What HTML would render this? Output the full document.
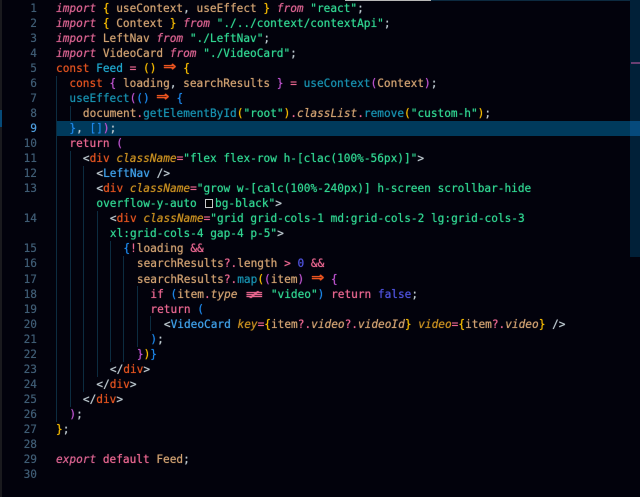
<!DOCTYPE html>
<html><head><meta charset="utf-8"><style>
html,body{margin:0;padding:0;background:#02020c}
#e{position:relative;width:640px;height:497px;overflow:hidden;background:#02020c;font:11.12px/15px "DejaVu Sans Mono","Liberation Mono",monospace;color:#cfa070}
.r{position:absolute;left:0;height:15px;white-space:pre;text-shadow:0 0 .7px currentColor}
.a{position:absolute}
.n{position:absolute;right:603px;color:#3f5c74;white-space:pre;text-shadow:0 0 .5px currentColor}
.g{position:absolute;width:1px;background:#0c2c40}
i{font-style:italic}
.k{color:#e8668f}.ki{color:#d8628f;font-style:italic}.c{color:#e0521f}.y{color:#f4ba00}.m{color:#bb52cc}.b{color:#1c86e8}
.s{color:#30d490}.f{color:#1790ae}.t{color:#1fa6cc}.w{color:#bcc8ce}.at{color:#c88f20;font-style:italic}.l{color:#3fa0e8}.v{color:#4e52dc}.q{color:#cfa070;font-style:italic}
.ar{display:inline-block;width:13.36px;height:10px;position:relative;line-height:0;color:#ea541f}
.ar b{position:absolute;left:-1px;top:5px;width:15.4px;text-align:center;font:bold 14px/0 "DejaVu Sans",sans-serif;transform:scaleX(1.15)}
.ne{display:inline-block;width:20px;color:#e8668f;text-align:center}
.ne b{display:inline-block;transform:scaleX(2.7);font-weight:normal}
.dec{display:inline-block;width:11.6px;height:8px;position:relative}
.dec u{position:absolute;left:1.5px;top:0;width:6px;height:7px;border:1px solid #c8c8c8;background:#000}
</style></head><body><div id="e">
<div class="a" style="left:0;top:0;width:2px;height:497px;background:#1a1a1e"></div>
<div class="a" style="left:0;top:110px;width:2px;height:17px;background:#064a78"></div>
<div class="a" style="left:345px;top:0;width:86px;height:1px;background:#b8b8b8"></div>
<div class="a" style="left:431px;top:0;width:199px;height:1px;background:#0c2a40"></div>
<div class="a" style="left:630px;top:0;width:10px;height:257px;background:#012038"></div>
<div class="a" style="left:56px;top:121px;width:574px;height:15px;background:#003a5c"></div>
<div class="a" style="left:630px;top:121px;width:10px;height:15px;background:#064a7c"></div>
<div class="a" style="left:631px;top:62px;width:9px;height:2px;background:#6a3f72"></div>

<div class="g" style="left:56px;top:76px;height:346px"></div>
<div class="g" style="left:70px;top:106px;height:15px"></div>
<div class="g" style="left:70px;top:151px;height:256px"></div>
<div class="g" style="left:83px;top:166px;height:226px"></div>
<div class="g" style="left:97px;top:211px;height:166px"></div>
<div class="g" style="left:110px;top:241px;height:121px"></div>
<div class="g" style="left:123px;top:256px;height:106px"></div>
<div class="g" style="left:137px;top:286px;height:61px"></div>
<div class="g" style="left:150px;top:316px;height:15px"></div>

<div class="n" style="top:0.6px">1</div>
<div class="n" style="top:15.65px">2</div>
<div class="n" style="top:30.7px">3</div>
<div class="n" style="top:45.75px">4</div>
<div class="n" style="top:60.8px">5</div>
<div class="n" style="top:75.85px">6</div>
<div class="n" style="top:90.9px">7</div>
<div class="n" style="top:105.95px">8</div>
<div class="n" style="top:121px;color:#4f9ede">9</div>
<div class="n" style="top:136.05px">10</div>
<div class="n" style="top:151.1px">11</div>
<div class="n" style="top:166.15px">12</div>
<div class="n" style="top:181.2px">13</div>
<div class="n" style="top:211.3px">14</div>
<div class="n" style="top:241.4px">15</div>
<div class="n" style="top:256.45px">16</div>
<div class="n" style="top:271.5px">17</div>
<div class="n" style="top:286.55px">18</div>
<div class="n" style="top:301.6px">19</div>
<div class="n" style="top:316.65px">20</div>
<div class="n" style="top:331.7px">21</div>
<div class="n" style="top:346.75px">22</div>
<div class="n" style="top:361.8px">23</div>
<div class="n" style="top:376.85px">24</div>
<div class="n" style="top:391.9px">25</div>
<div class="n" style="top:406.95px">26</div>
<div class="n" style="top:422px">27</div>
<div class="n" style="top:437.05px">28</div>
<div class="n" style="top:452.1px">29</div>
<div class="n" style="top:467.15px">30</div>

<div class="r" style="left:56px;top:0.6px"><span class="ki">import</span> <span class="y">{</span> useContext<span class="w">,</span> useEffect <span class="y">}</span> <span class="ki">from</span> <span class="s">"react"</span><span class="w">;</span></div>
<div class="r" style="left:56px;top:15.65px"><span class="ki">import</span> <span class="y">{</span> Context <span class="y">}</span> <span class="ki">from</span> <span class="s">"./../context/contextApi"</span><span class="w">;</span></div>
<div class="r" style="left:56px;top:30.7px"><span class="ki">import</span> LeftNav <span class="ki">from</span> <span class="s">"./LeftNav"</span><span class="w">;</span></div>
<div class="r" style="left:56px;top:45.75px"><span class="ki">import</span> VideoCard <span class="ki">from</span> <span class="s">"./VideoCard"</span><span class="w">;</span></div>
<div class="r" style="left:56px;top:60.8px"><span class="c">const</span> <span class="t">Feed</span> <span class="k">=</span> <span class="y">()</span> <span class="ar"><b>⇒</b></span> <span class="y">{</span></div>
<div class="r" style="left:69.4px;top:75.85px"><span class="c">const</span> <span class="m">{</span> loading<span class="w">,</span> searchResults <span class="m">}</span> <span class="k">=</span> <span class="f">useContext</span><span class="m">(</span>Context<span class="m">)</span><span class="w">;</span></div>
<div class="r" style="left:69.4px;top:90.9px"><span class="f">useEffect</span><span class="m">(</span><span class="b">()</span> <span class="ar"><b>⇒</b></span> <span class="b">{</span></div>
<div class="r" style="left:82.9px;top:105.95px">document<span class="k">.</span><span class="f">getElementById</span><span class="y">(</span><span class="s">"root"</span><span class="y">)</span><span class="k">.</span><span class="q">classList</span><span class="k">.</span><span class="f">remove</span><span class="y">(</span><span class="s">"custom-h"</span><span class="y">)</span><span class="w">;</span></div>
<div class="r" style="left:69.4px;top:121px"><span class="b">}</span><span class="w">,</span> <span class="b">[]</span><span class="m">)</span><span class="w">;</span></div>
<div class="r" style="left:69.4px;top:136.05px"><span class="k">return</span> <span class="m">(</span></div>
<div class="r" style="left:82.9px;top:151.1px"><span class="w">&lt;</span><span class="c">div</span> <span class="at">className</span><span class="k">=</span><span class="s">"flex flex-row h-[clac(100%-56px)]"</span><span class="w">&gt;</span></div>
<div class="r" style="left:96.4px;top:166.15px"><span class="w">&lt;</span><span class="l">LeftNav</span> <span class="w">/&gt;</span></div>
<div class="r" style="left:96.4px;top:181.2px"><span class="w">&lt;</span><span class="c">div</span> <span class="at">className</span><span class="k">=</span><span class="s">"grow w-[calc(100%-240px)] h-screen scrollbar-hide</span></div>
<div class="r" style="left:96.4px;top:196.25px"><span class="s">overflow-y-auto </span><span class="dec"><u></u></span><span class="s">bg-black"</span><span class="w">&gt;</span></div>
<div class="r" style="left:109.9px;top:211.3px"><span class="w">&lt;</span><span class="c">div</span> <span class="at">className</span><span class="k">=</span><span class="s">"grid grid-cols-1 md:grid-cols-2 lg:grid-cols-3</span></div>
<div class="r" style="left:109.9px;top:226.35px"><span class="s">xl:grid-cols-4 gap-4 p-5"</span><span class="w">&gt;</span></div>
<div class="r" style="left:123.4px;top:241.4px"><span class="b">{</span><span class="k">!</span>loading <span class="k">&amp;&amp;</span></div>
<div class="r" style="left:136.9px;top:256.45px">searchResults<span class="k">?.</span>length <span class="k">&gt;</span> <span class="v">0</span> <span class="k">&amp;&amp;</span></div>
<div class="r" style="left:136.9px;top:271.5px">searchResults<span class="k">?.</span><span class="f">map</span><span class="y">(</span><span class="m">(</span>item<span class="m">)</span> <span class="ar"><b>⇒</b></span> <span class="m">{</span></div>
<div class="r" style="left:150.4px;top:286.55px"><span class="k">if</span> <span class="b">(</span>item<span class="k">.</span><span class="q">type</span> <span class="ne"><b>≢</b></span> <span class="s">"video"</span><span class="b">)</span> <span class="k">return</span> <span class="v">false</span><span class="w">;</span></div>
<div class="r" style="left:150.4px;top:301.6px"><span class="k">return</span> <span class="b">(</span></div>
<div class="r" style="left:163.9px;top:316.65px"><span class="w">&lt;</span><span class="l">VideoCard</span> <span class="at">key</span><span class="k">=</span><span class="y">{</span>item<span class="k">?.</span><span class="q">video</span><span class="k">?.</span><span class="q">videoId</span><span class="y">}</span> <span class="at">video</span><span class="k">=</span><span class="y">{</span>item<span class="k">?.</span><span class="q">video</span><span class="y">}</span> <span class="w">/&gt;</span></div>
<div class="r" style="left:150.4px;top:331.7px"><span class="b">)</span><span class="w">;</span></div>
<div class="r" style="left:136.9px;top:346.75px"><span class="m">}</span><span class="y">)</span><span class="b">}</span></div>
<div class="r" style="left:109.9px;top:361.8px"><span class="w">&lt;/</span><span class="c">div</span><span class="w">&gt;</span></div>
<div class="r" style="left:96.4px;top:376.85px"><span class="w">&lt;/</span><span class="c">div</span><span class="w">&gt;</span></div>
<div class="r" style="left:82.9px;top:391.9px"><span class="w">&lt;/</span><span class="c">div</span><span class="w">&gt;</span></div>
<div class="r" style="left:69.4px;top:406.95px"><span class="m">)</span><span class="w">;</span></div>
<div class="r" style="left:56px;top:422px"><span class="y">}</span><span class="w">;</span></div>
<div class="r" style="left:56px;top:452.1px"><span class="ki">export</span> <span class="k">default</span> Feed<span class="w">;</span></div>
</div></body></html>
